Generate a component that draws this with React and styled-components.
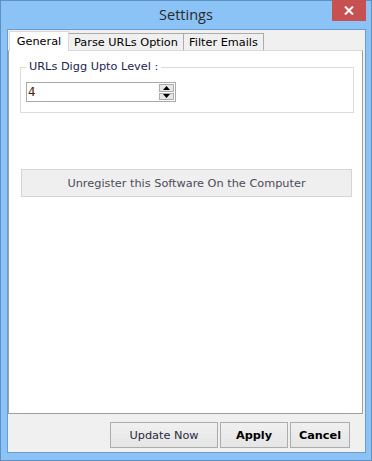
import React from 'react';
import styled, { createGlobalStyle } from 'styled-components';

const GlobalStyle = createGlobalStyle`
  html, body {
    margin: 0;
    padding: 0;
    background: #ffffff;
  }
  * {
    box-sizing: border-box;
  }
`;

const tabs = [
  { label: 'General', width: 60, active: true },
  { label: 'Parse URLs Option', width: 116 },
  { label: 'Filter Emails', width: 81 },
];

const App = () => {
  return (
    <>
      <GlobalStyle />
      <StyledWindow>
        <StyledTitleBar>
          <StyledTitle>Settings</StyledTitle>
          <StyledCloseButton aria-label="Close">
            <svg width="10" height="9" viewBox="0 0 10 9">
              <path d="M1 0.5 L9 8.5 M9 0.5 L1 8.5" stroke="#fff" strokeWidth="2" />
            </svg>
          </StyledCloseButton>
        </StyledTitleBar>

        <StyledClient>
          <StyledTabStrip>
            {tabs.map((tab) => (
              <StyledTab key={tab.label} $active={tab.active} $width={tab.width}>
                {tab.label}
              </StyledTab>
            ))}
          </StyledTabStrip>

          <StyledPage>
            <StyledGroup>
              <StyledLegend>URLs Digg Upto Level :</StyledLegend>
              <StyledSpinner>
                <StyledSpinValue>4</StyledSpinValue>
                <StyledSpinButtons>
                  <StyledSpinButton>
                    <svg width="7" height="4" viewBox="0 0 7 4">
                      <path d="M0 4 L3.5 0 L7 4 Z" fill="#000" />
                    </svg>
                  </StyledSpinButton>
                  <StyledSpinButton>
                    <svg width="7" height="4" viewBox="0 0 7 4">
                      <path d="M0 0 L7 0 L3.5 4 Z" fill="#000" />
                    </svg>
                  </StyledSpinButton>
                </StyledSpinButtons>
              </StyledSpinner>
            </StyledGroup>

            <StyledWideButton>Unregister this Software On the Computer</StyledWideButton>
          </StyledPage>

          <StyledFooter>
            <StyledButton $width={108}>Update Now</StyledButton>
            <StyledButton $width={68} $bold>Apply</StyledButton>
            <StyledButton $width={60} $bold>Cancel</StyledButton>
          </StyledFooter>
        </StyledClient>
      </StyledWindow>
    </>
  );
};

const StyledWindow = styled.div`
  width: 372px;
  height: 461px;
  display: flex;
  flex-direction: column;
  background-color: #8bc3f6;
  border: 1px solid #5e90c2;
  font-family: 'DejaVu Sans', Verdana, sans-serif;
  font-size: 11.3px;
  color: #000;
`;

const StyledTitleBar = styled.div`
  height: 28px;
  display: grid;
  grid-template-columns: 1fr auto 1fr;
  align-items: start;
`;

const StyledTitle = styled.div`
  grid-column: 2;
  font-family: 'Open Sans', 'Noto Sans', sans-serif;
  font-size: 14.5px;
  line-height: 28px;
  color: #2a2a2a;
`;

const StyledCloseButton = styled.div`
  grid-column: 3;
  justify-self: end;
  width: 34px;
  height: 21px;
  margin-top: -1px;
  margin-right: 5px;
  background-color: #c75050;
  display: flex;
  align-items: center;
  justify-content: center;
`;

const StyledClient = styled.div`
  flex: 1;
  margin: 0 5px 7px 6px;
  border: 1px solid #6a9ccd;
  background-color: #f0f0f0;
  display: flex;
  flex-direction: column;
  padding: 1px 0 4px 0;
`;

const StyledTabStrip = styled.div`
  height: 19px;
  display: flex;
  align-items: flex-end;
  margin-left: 1px;
`;

const StyledTab = styled.div`
  width: ${({ $width }) => $width}px;
  height: ${({ $active }) => ($active ? '20px' : '17px')};
  margin-bottom: ${({ $active }) => ($active ? '-1px' : '0')};
  margin-left: ${({ $active }) => ($active ? '0' : '-1px')};
  position: relative;
  z-index: ${({ $active }) => ($active ? 1 : 0)};
  background-color: ${({ $active }) => ($active ? '#ffffff' : '#f0f0f0')};
  border: 1px solid ${({ $active }) => ($active ? '#d9d9d9' : '#acacac')};
  border-bottom: none;
  display: flex;
  align-items: center;
  justify-content: center;
  padding-top: ${({ $active }) => ($active ? '0' : '1px')};
  white-space: nowrap;
  color: #000;

  &:first-child {
    margin-left: 0;
  }
`;

const StyledPage = styled.div`
  flex: 1;
  margin-right: 2px;
  background-color: #ffffff;
  border: 1px solid #a0a0a0;
  border-top-color: #d9d9d9;
  padding: 0 8px 0 11px;
  display: flex;
  flex-direction: column;
`;

const StyledGroup = styled.fieldset`
  margin: 9px 0 0 0;
  padding: 0 5px 10px 5px;
  border: 1px solid #dcdcdc;
  min-width: 0;
`;

const StyledLegend = styled.legend`
  padding: 0 3px;
  line-height: 14px;
  color: #1b2550;
`;

const StyledSpinner = styled.div`
  width: 150px;
  height: 20px;
  margin-top: 8px;
  border: 1px solid #a9a9a9;
  display: flex;
  align-items: stretch;
  background-color: #ffffff;
`;

const StyledSpinValue = styled.div`
  flex: 1;
  padding-left: 1px;
  display: flex;
  align-items: center;
  color: #402400;
  font-size: 11.8px;
`;

const StyledSpinButtons = styled.div`
  width: 16px;
  display: flex;
  flex-direction: column;
  padding: 1px 1px 1px 0;
  gap: 1px;
`;

const StyledSpinButton = styled.div`
  flex: 1;
  background-color: #e6e6e6;
  border: 1px solid #acacac;
  display: flex;
  align-items: center;
  justify-content: center;
`;

const StyledWideButton = styled.div`
  width: 331px;
  height: 28px;
  margin: 56px 0 0 1px;
  background-color: #efefef;
  border: 1px solid #d5d5d5;
  display: flex;
  align-items: center;
  justify-content: center;
  color: #4c4c58;
`;

const StyledFooter = styled.div`
  display: flex;
  justify-content: flex-end;
  gap: 2px;
  padding: 8px 15px 0 0;
`;

const StyledButton = styled.div`
  width: ${({ $width }) => $width}px;
  height: 26px;
  border: 1px solid #acacac;
  background: linear-gradient(#f0f0f0, #e5e5e5);
  display: flex;
  align-items: center;
  justify-content: center;
  font-weight: ${({ $bold }) => ($bold ? 700 : 400)};
  color: ${({ $bold }) => ($bold ? '#000' : '#2a2a3a')};
`;

export default App;
